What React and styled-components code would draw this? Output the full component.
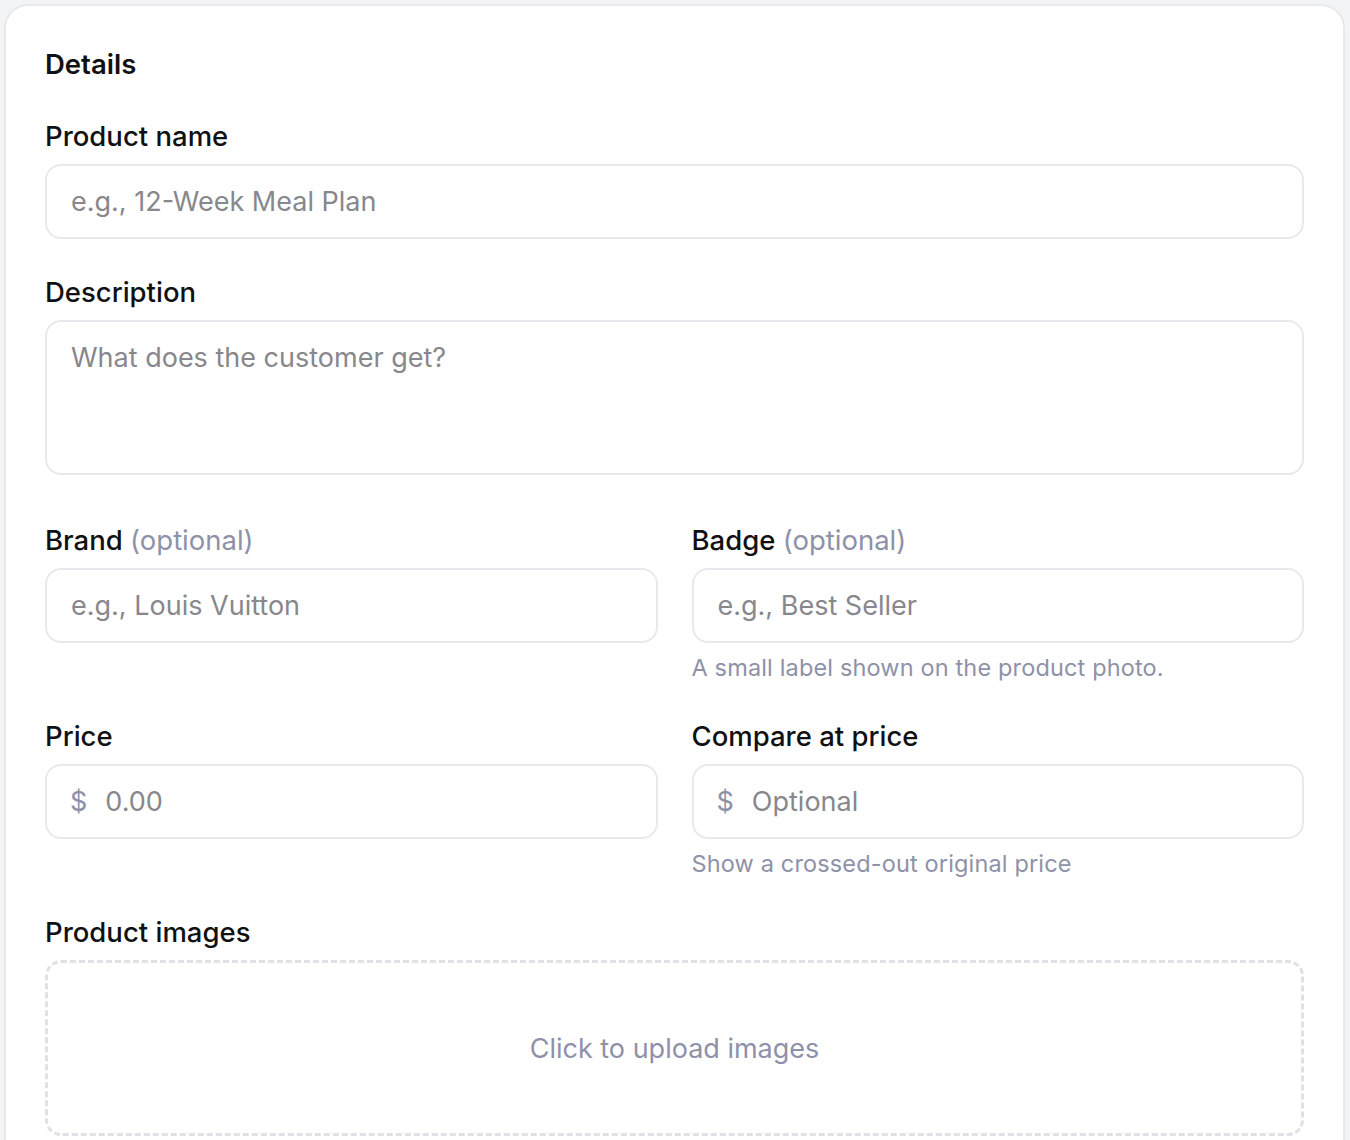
import styled, { createGlobalStyle } from "styled-components";

const GlobalStyle = createGlobalStyle`
  * {
    box-sizing: border-box;
  }

  body {
    margin: 0;
    padding: 4px 5px 0 4px;
    background: #f3f4f6;
    font-family: Inter, "Noto Sans", sans-serif;
    color: #111113;
  }
`;

const Card = styled.section`
  background: #ffffff;
  border: 2px solid #e8e9ed;
  border-bottom: none;
  border-radius: 24px 24px 0 0;
  padding: 40px 39px 0 39px;
  min-height: 1136px;
`;

const Title = styled.h2`
  margin: 0 0 36px;
  font-size: 27.5px;
  line-height: 36px;
  font-weight: 600;
`;

const Field = styled.div`
  display: flex;
  flex-direction: column;
  margin-bottom: ${(p) => p.$space || 35}px;
`;

const Label = styled.label`
  font-size: 27.5px;
  line-height: 36px;
  font-weight: 500;
  margin-bottom: 10px;
`;

const Optional = styled.span`
  color: #8e91a8;
  font-weight: 400;
`;

const Box = styled.div`
  display: flex;
  align-items: center;
  height: 75px;
  padding: 0 24px;
  border: 2px solid #e8e9ed;
  border-radius: 16px;
  background: #ffffff;
`;

const Input = styled.input`
  flex: 1;
  min-width: 0;
  border: none;
  outline: none;
  padding: 0;
  background: transparent;
  font-family: inherit;
  font-size: 27px;
  color: #111113;

  &::placeholder {
    color: #87878c;
  }
`;

const Currency = styled.span`
  font-size: 27px;
  color: #8e91a8;
  margin-right: 18px;
  margin-left: -1px;
`;

const TextArea = styled.textarea`
  display: block;
  height: 155px;
  padding: 18px 24px;
  border: 2px solid #e8e9ed;
  border-radius: 16px;
  resize: none;
  outline: none;
  font-family: inherit;
  font-size: 27px;
  line-height: 36px;

  &::placeholder {
    color: #87878c;
  }
`;

const Row = styled.div`
  display: grid;
  grid-template-columns: 1fr 1fr;
  column-gap: 34px;
`;

const Hint = styled.p`
  margin: 10px 0 0;
  font-size: 23.5px;
  line-height: 30px;
  color: #8e91a8;
  letter-spacing: 0.15px;
`;

const Dropzone = styled.div`
  display: flex;
  align-items: center;
  justify-content: center;
  height: 176px;
  border: 3px dashed #e0e1e6;
  border-radius: 16px;
  font-size: 27px;
  color: #8e91a8;
  cursor: pointer;
`;

function Details() {
  return (
    <Card>
      <Title>Details</Title>

      <Field>
        <Label>Product name</Label>
        <Box>
          <Input placeholder="e.g., 12-Week Meal Plan" />
        </Box>
      </Field>

      <Field $space={47}>
        <Label>Description</Label>
        <TextArea placeholder="What does the customer get?" />
      </Field>

      <Row>
        <Field>
          <Label>
            Brand <Optional>(optional)</Optional>
          </Label>
          <Box>
            <Input placeholder="e.g., Louis Vuitton" />
          </Box>
        </Field>
        <Field>
          <Label>
            Badge <Optional>(optional)</Optional>
          </Label>
          <Box>
            <Input placeholder="e.g., Best Seller" />
          </Box>
          <Hint>A small label shown on the product photo.</Hint>
        </Field>
      </Row>

      <Row>
        <Field>
          <Label>Price</Label>
          <Box>
            <Currency>$</Currency>
            <Input placeholder="0.00" />
          </Box>
        </Field>
        <Field>
          <Label>Compare at price</Label>
          <Box>
            <Currency>$</Currency>
            <Input placeholder="Optional" />
          </Box>
          <Hint>Show a crossed-out original price</Hint>
        </Field>
      </Row>

      <Field>
        <Label>Product images</Label>
        <Dropzone>Click to upload images</Dropzone>
      </Field>
    </Card>
  );
}

export default function App() {
  return (
    <>
      <GlobalStyle />
      <Details />
    </>
  );
}
